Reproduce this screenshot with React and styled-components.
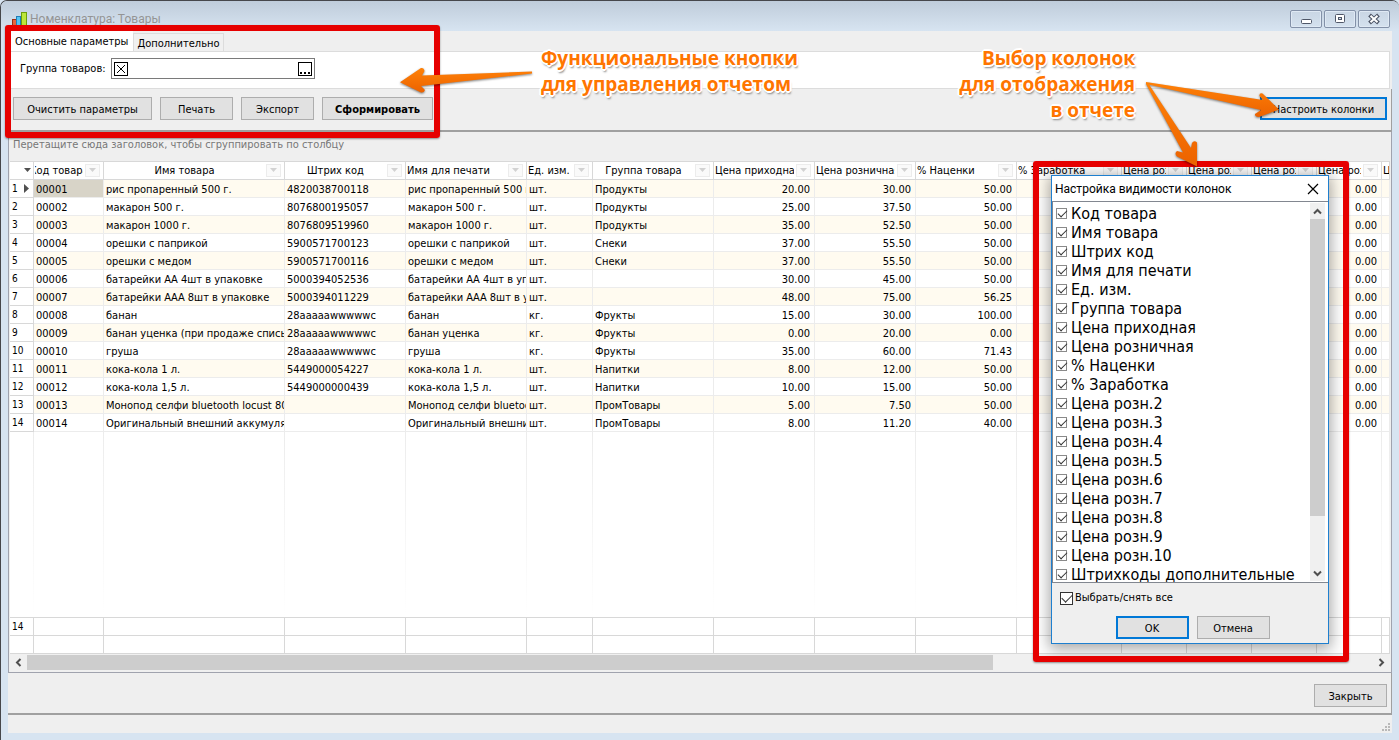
import styled, { createGlobalStyle } from 'styled-components'

const GlobalStyle = createGlobalStyle`
  * {
    box-sizing: border-box;
  }
  body {
    margin: 0;
    background: #d7e4f1;
    color: #000;
    font-family: 'DejaVu Sans Condensed', 'DejaVu Sans', Tahoma, sans-serif;
    font-size: 11px;
    line-height: 14px;
  }
  button, input {
    font: inherit;
    color: inherit;
  }
`

const columns = [
  { name: 'Код товара', width: 70, centered: true },
  { name: 'Имя товара', width: 181, centered: true },
  { name: 'Штрих код', width: 121, centered: true },
  { name: 'Имя для печати', width: 121 },
  { name: 'Ед. изм.', width: 66 },
  { name: 'Группа товара', width: 121, centered: true },
  { name: 'Цена приходная', width: 101, numeric: true },
  { name: 'Цена розничная', width: 101, numeric: true },
  { name: '% Наценки', width: 101, numeric: true },
  { name: '% Заработка', width: 105, numeric: true },
  { name: 'Цена розн.2', width: 65, numeric: true },
  { name: 'Цена розн.3', width: 65, numeric: true },
  { name: 'Цена розн.4', width: 65, numeric: true },
  { name: 'Цена розн.5', width: 65, numeric: true },
  { name: 'Цена розн.6', numeric: true },
]

const zeros = ['', '0.00', '0.00', '0.00', '0.00', '']

const goods = [
  ['00001', 'рис пропаренный 500 г.', '4820038700118', 'рис пропаренный 500 г.', 'шт.', 'Продукты', '20.00', '30.00', '50.00'],
  ['00002', 'макарон 500 г.', '8076800195057', 'макарон 500 г.', 'шт.', 'Продукты', '25.00', '37.50', '50.00'],
  ['00003', 'макарон 1000 г.', '8076809519960', 'макарон 1000 г.', 'шт.', 'Продукты', '35.00', '52.50', '50.00'],
  ['00004', 'орешки с паприкой', '5900571700123', 'орешки с паприкой', 'шт.', 'Снеки', '37.00', '55.50', '50.00'],
  ['00005', 'орешки с медом', '5900571700116', 'орешки с медом', 'шт.', 'Снеки', '37.00', '55.50', '50.00'],
  ['00006', 'батарейки АА 4шт в упаковке', '5000394052536', 'батарейки АА 4шт в упаковке', 'шт.', '', '30.00', '45.00', '50.00'],
  ['00007', 'батарейки ААА 8шт в упаковке', '5000394011229', 'батарейки ААА 8шт в упаковке', 'шт.', '', '48.00', '75.00', '56.25'],
  ['00008', 'банан', '28aaaaawwwwwc', 'банан', 'кг.', 'Фрукты', '15.00', '30.00', '100.00'],
  ['00009', 'банан уценка (при продаже списывать)', '28aaaaawwwwwc', 'банан уценка', 'кг.', 'Фрукты', '0.00', '20.00', '0.00'],
  ['00010', 'груша', '28aaaaawwwwwc', 'груша', 'кг.', 'Фрукты', '35.00', '60.00', '71.43'],
  ['00011', 'кока-кола 1 л.', '5449000054227', 'кока-кола 1 л.', 'шт.', 'Напитки', '8.00', '12.00', '50.00'],
  ['00012', 'кока-кола 1,5 л.', '5449000000439', 'кока-кола 1,5 л.', 'шт.', 'Напитки', '10.00', '15.00', '50.00'],
  ['00013', 'Монопод селфи bluetooth locust 80 см', '', 'Монопод селфи bluetooth', 'шт.', 'ПромТовары', '5.00', '7.50', '50.00'],
  ['00014', 'Оригинальный внешний аккумулятор', '', 'Оригинальный внешний', 'шт.', 'ПромТовары', '8.00', '11.20', '40.00'],
].map(row => [...row, ...zeros])

const columnChoices = [
  'Код товара', 'Имя товара', 'Штрих код', 'Имя для печати', 'Ед. изм.',
  'Группа товара', 'Цена приходная', 'Цена розничная', '% Наценки', '% Заработка',
  'Цена розн.2', 'Цена розн.3', 'Цена розн.4', 'Цена розн.5', 'Цена розн.6',
  'Цена розн.7', 'Цена розн.8', 'Цена розн.9', 'Цена розн.10', 'Штрихкоды дополнительные',
]

const Window = styled.div`
  position: relative;
  display: flex;
  flex-direction: column;
  min-height: 100vh;
  padding: 0 7px 7px;
  overflow: hidden;
  background: #d7e4f1;
  border: 1px solid #46474b;
  border-width: 1px 0 0 1px;
  border-radius: 7px 7px 0 0;
`
const TitleBar = styled.header`
  display: flex;
  align-items: center;
  gap: 3px;
  height: 30px;
  margin: 0 -7px;
  padding: 6px 9px 0 10px;
  background: linear-gradient(#bfccda, #d7e4f1);
`
const Title = styled.h1`
  flex: 1;
  margin: 0;
  color: #949494;
  font: 12px/16px Roboto, sans-serif;
`
const CaptionButtons = styled.div`
  display: flex;
  gap: 2px;
`
const CaptionButton = styled.button`
  display: flex;
  align-items: center;
  justify-content: center;
  width: 32px;
  height: 18px;
  padding: 0;
  background: linear-gradient(#c9d6e4, #d4e1ee);
  border: 1px solid #8391a8;
  border-radius: 2px;
  box-shadow: inset 0 0 0 1px #dfe9f4;
`
const Client = styled.main`
  flex: 1;
  display: flex;
  flex-direction: column;
  background: #efefef;
`
const Tabs = styled.div`
  display: flex;
  align-items: flex-end;
  height: 20px;
  padding-left: 2px;
`
const Tab = styled.button`
  height: ${({ active }) => (active ? 20 : 18)}px;
  padding: ${({ active }) => (active ? '2px 5px 0' : '2px 3px 0')};
  background: ${({ active }) => (active ? '#fff' : '#f0f0f0')};
  border: 1px solid #dcdcdc;
  border-width: ${({ active }) => (active ? '0' : '1px 1px 0')};
`
const Params = styled.div`
  display: flex;
  align-items: center;
  gap: 5px;
  height: 38px;
  margin: 0 2px;
  padding: 0 9px 3px;
  background: #fff;
  border: 1px solid #dcdcdc;
  border-left-color: #fff;
`
const Lookup = styled.div`
  display: flex;
  align-items: center;
  width: 204px;
  height: 21px;
  padding: 0 2px;
  border: 1px solid #7a7a7a;
`
const LookupInput = styled.input`
  flex: 1;
  min-width: 0;
  padding: 0 4px;
  background: none;
  border: 0;
  outline: 0;
`
const LookupButton = styled.button`
  display: flex;
  width: 14px;
  height: 14px;
  padding: 0;
  background: #fff;
  border: 1px solid #000;
`
const Toolbar = styled.div`
  display: flex;
  gap: 8px;
  height: 43px;
  padding: 8px 4px 0 5px;
  border-bottom: 2px solid #a0a0a0;
  border-right: 1px solid #a0a0a0;
`
const Button = styled.button`
  min-width: ${({ width }) => width || 73}px;
  height: 23px;
  padding: 2px 0 0;
  margin-left: ${({ pushed }) => (pushed ? 'auto' : 0)};
  background: #e1e1e1;
  border: ${({ focused }) => (focused ? '2px solid #0078d7' : '1px solid #adadad')};
  font-weight: ${({ bold }) => (bold ? 'bold' : 'normal')};
`
const Grid = styled.section`
  flex: 1;
  display: flex;
  flex-direction: column;
  padding: 0 1px;
  border: 1px solid #a0a3ae;
  border-top: 0;
`
const GroupHint = styled.div`
  height: 29px;
  padding: 6px 3px;
  color: #777;
`
const Sheet = styled.div`
  flex: 1;
  display: flex;
  flex-direction: column;
  background: #fff;
`
const Table = styled.table`
  width: 100%;
  table-layout: fixed;
  border-collapse: separate;
  border-spacing: 0;
`
const HeadCell = styled.th`
  height: 19px;
  padding: 0;
  font-weight: normal;
  border: 1px solid #d8d8d8;
  border-width: 1px 1px 1px 0;
`
const HeadContent = styled.div`
  display: flex;
  align-items: center;
  gap: 2px;
  height: 17px;
  padding: ${({ narrow }) => (narrow ? '0 0 0 1px' : '0 3px 0 1px')};
  overflow: hidden;
`
const HeadText = styled.span`
  flex: 1;
  display: flex;
  justify-content: ${({ centered }) => (centered ? 'center' : 'flex-start')};
  min-width: 0;
  overflow: hidden;
  white-space: nowrap;
`
const FilterButton = styled.button`
  flex: none;
  display: flex;
  align-items: center;
  justify-content: center;
  width: 15px;
  height: 13px;
  padding: 0;
  background: #fafafa;
  border: 1px solid #ececec;
`
const CornerMark = styled.div`
  display: flex;
  justify-content: flex-end;
  padding-right: 2px;
`
const Row = styled.tr`
  background: ${({ tinted }) => (tinted ? '#fffbf0' : '#fff')};
`
const RowNumber = styled.th`
  height: 18px;
  padding: 0 3px 0 2px;
  background: #fff;
  border: 1px solid #d8d8d8;
  border-width: 0 1px 1px 0;
  font-size: 10px;
  font-weight: normal;
  line-height: 12px;
  text-align: left;
`
const RowMark = styled.div`
  display: flex;
  align-items: center;
  justify-content: space-between;
`
const Cell = styled.td`
  height: 18px;
  padding: 2px 4px 0 2px;
  overflow: hidden;
  white-space: nowrap;
  text-align: ${({ numeric }) => (numeric ? 'right' : 'left')};
  background: ${({ selected }) => (selected ? '#d8d4c8' : 'none')};
  border: 1px solid #ececec;
  border-width: 0 1px 1px 0;
`
const Filler = styled.div`
  flex: 1;
  display: flex;
`
const FillerColumn = styled.div`
  flex: ${({ width }) => (width ? `0 0 ${width}px` : '1')};
  background: linear-gradient(#ececec, #fff) right / 1px 100% no-repeat;
`
const TotalCell = styled.td`
  height: 18px;
  padding: 0 2px;
  font-size: 10px;
  line-height: 12px;
  border: 1px solid #d8d8d8;
  border-width: 0 1px 1px 0;
`
const Totals = styled(Table)`
  border-top: 1px solid #d8d8d8;
`
const HScroll = styled.div`
  display: flex;
  align-items: center;
  justify-content: space-between;
  height: 18px;
  padding: 0 0 1px;
  background: #f0f0f0;
`
const HThumb = styled.div`
  width: 70%;
  height: 15px;
  margin-right: auto;
  background: #cdcdcd;
`
const ScrollArrow = styled.button`
  display: flex;
  align-items: center;
  justify-content: center;
  width: 17px;
  height: 16px;
  padding: 0;
  background: #f0f0f0;
  border: 0;
`
const Footer = styled.footer`
  display: flex;
  justify-content: flex-end;
  height: 42px;
  padding: 11px 4px 0;
  border: 1px solid #a0a0a0;
  border-width: 0 1px 2px 0;
`
const StatusBar = styled.div`
  display: flex;
  align-items: flex-end;
  justify-content: flex-end;
  height: 18px;
  padding: 0 2px 2px;
`

const Dialog = styled.div`
  position: absolute;
  top: 174px;
  right: 70px;
  display: flex;
  flex-direction: column;
  width: 278px;
  background: #efefef;
  border: 1px solid #1e7fcf;
  box-shadow: 0 3px 14px 2px rgba(0, 0, 0, 0.35);
`
const DialogHead = styled.div`
  display: flex;
  align-items: center;
  justify-content: space-between;
  height: 25px;
  padding: 0 9px 0 3px;
  background: #fff;
`
const DialogTitle = styled.h2`
  margin: 0;
  font: 12px/16px Roboto, sans-serif;
`
const CloseButton = styled.button`
  display: flex;
  padding: 0;
  background: none;
  border: 0;
`
const ListBox = styled.div`
  display: flex;
  height: 382px;
  padding-left: 3px;
  overflow: hidden;
  background: #fff;
  border: 1px solid #828790;
  border-right: 0;
`
const List = styled.ul`
  flex: 1;
  margin: 0;
  padding: 2px 0 0;
  list-style: none;
`
const Choice = styled.label`
  display: flex;
  align-items: center;
  gap: 4px;
  height: 19px;
  font-size: 16px;
  line-height: 19px;
  white-space: nowrap;
`
const Check = styled.input.attrs({ type: 'checkbox' })`
  appearance: none;
  position: relative;
  flex: none;
  width: ${({ large }) => (large ? 13 : 11)}px;
  height: ${({ large }) => (large ? 13 : 11)}px;
  margin: 0;
  background: #fff;
  border: 1px solid ${({ large }) => (large ? '#333' : '#8a8a8a')};

  &:checked::after {
    content: '';
    position: absolute;
    left: 1px;
    top: 1px;
    width: ${({ large }) => (large ? 9 : 8)}px;
    height: ${({ large }) => (large ? 5 : 4)}px;
    border: 1px solid #333;
    border-width: 0 0 1px 1px;
    transform: rotate(-45deg);
  }
`
const VScroll = styled.div`
  display: flex;
  flex-direction: column;
  justify-content: space-between;
  width: 15px;
  margin: 1px 3px 1px 0;
  background: #f0f0f0;

  button {
    width: 15px;
  }
`
const VThumb = styled.div`
  height: 297px;
  margin-bottom: auto;
  background: #cdcdcd;
`
const SelectAll = styled.label`
  display: flex;
  align-items: center;
  gap: 2px;
  padding: 8px 8px 0;
`
const DialogButtons = styled.div`
  display: flex;
  justify-content: center;
  gap: 8px;
  padding: 11px 0 4px 5px;
`

const Frame = styled.div`
  position: absolute;
  border: 6px solid #e60000;
  border-radius: 3px;
  box-shadow: 0 1px 2px rgba(0, 0, 0, 0.4);
  pointer-events: none;
`
const ParamsFrame = styled(Frame)`
  top: 24px;
  left: 4px;
  width: 435px;
  height: 113px;
`
const ColumnsFrame = styled(Frame)`
  top: 160px;
  right: 50px;
  width: 316px;
  height: 501px;
`
const Note = styled.p`
  position: absolute;
  margin: 0;
  color: #ff7500;
  font: bold 19px/26px 'Open Sans', sans-serif;
  white-space: pre-line;
  text-shadow: -2px 0 #fff, 2px 0 #fff, 0 -2px #fff, 0 2px #fff, -1px -1px #fff,
    1px -1px #fff, -1px 1px #fff, 1px 1px #fff, 1px 3px 2px #888;
`
const ButtonsNote = styled(Note)`
  top: 44px;
  left: 540px;
`
const ColumnsNote = styled(Note)`
  top: 44px;
  right: 264px;
  text-align: right;
`
const Arrows = styled.svg`
  position: absolute;
  pointer-events: none;
  filter: drop-shadow(0 1px 1px rgba(0, 0, 0, 0.5));
`
const ButtonsArrow = styled(Arrows)`
  top: 59px;
  left: 394px;
`
const ColumnsArrows = styled(Arrows)`
  top: 74px;
  right: 99px;
`

const AppIcon = () => (
  <svg width="16" height="16" viewBox="0 0 16 16">
    <rect x="1.500" y="8.500" width="4" height="6" fill="#e8653f" stroke="#9a2f14" />
    <rect x="5.500" y="5.500" width="4" height="9" fill="#55c3f2" stroke="#1f7fb8" />
    <rect x="10.500" y="1.500" width="5" height="13" fill="#bde63a" stroke="#6da00a" />
  </svg>
)

const Triangle = ({ color, right }) => (
  <svg width="7" height="9" viewBox="0 0 7 9">
    <path d={right ? 'M1 0v9l5-4.500z' : 'M0 2h7L3.500 6z'} fill={color} />
  </svg>
)

const Chevron = ({ d }) => (
  <svg width="9" height="9" viewBox="0 0 9 9">
    <path d={d} fill="none" stroke="#505050" strokeWidth="2" />
  </svg>
)

const Columns = () => (
  <colgroup>
    <col width="24" />
    {columns.map(({ name, width }) => <col key={name} width={width} />)}
  </colgroup>
)

const GoodsGrid = () => (
  <Grid>
    <GroupHint>Перетащите сюда заголовок, чтобы сгруппировать по столбцу</GroupHint>
    <Sheet>
      <Table>
        <Columns />
        <thead>
          <tr>
            <HeadCell><CornerMark><Triangle color="#505050" /></CornerMark></HeadCell>
            {columns.map(({ name, centered, width }) => (
              <HeadCell key={name}>
                <HeadContent narrow={width ? 0 : 1}>
                  <HeadText centered={centered ? 1 : 0}>{name}</HeadText>
                  {width && <FilterButton aria-label="Фильтр"><Triangle color="#d2d2d2" /></FilterButton>}
                </HeadContent>
              </HeadCell>
            ))}
          </tr>
        </thead>
        <tbody>
          {goods.map((row, i) => (
            <Row key={row[0]} tinted={i % 2 === 0 ? 1 : 0}>
              <RowNumber>
                <RowMark>{i + 1}{i === 0 && <Triangle color="#505050" right />}</RowMark>
              </RowNumber>
              {row.map((value, c) => (
                <Cell key={c} numeric={columns[c].numeric ? 1 : 0} selected={i === 0 && c === 0}>{value}</Cell>
              ))}
            </Row>
          ))}
        </tbody>
      </Table>
      <Filler>
        <FillerColumn width={24} />
        {columns.map(({ name, width }) => <FillerColumn key={name} width={width} />)}
      </Filler>
      <Totals>
        <Columns />
        <tbody>
          <tr>
            <TotalCell>14</TotalCell>
            {columns.map(({ name }) => <TotalCell key={name} />)}
          </tr>
          <tr>
            <TotalCell />
            {columns.map(({ name }) => <TotalCell key={name} />)}
          </tr>
        </tbody>
      </Totals>
    </Sheet>
    <HScroll>
      <ScrollArrow aria-label="Влево"><Chevron d="M6.500 1L3 4.500L6.500 8" /></ScrollArrow>
      <HThumb />
      <ScrollArrow aria-label="Вправо"><Chevron d="M2.500 1L6 4.500L2.500 8" /></ScrollArrow>
    </HScroll>
  </Grid>
)

const ColumnsDialog = () => (
  <Dialog role="dialog" aria-labelledby="columns-title">
    <DialogHead>
      <DialogTitle id="columns-title">Настройка видимости колонок</DialogTitle>
      <CloseButton aria-label="Закрыть окно">
        <svg width="12" height="12" viewBox="0 0 12 12">
          <path d="M1 1l10 10M11 1L1 11" stroke="#000" strokeWidth="1.200" />
        </svg>
      </CloseButton>
    </DialogHead>
    <ListBox>
      <List>
        {columnChoices.map(name => (
          <li key={name}>
            <Choice><Check defaultChecked /> {name}</Choice>
          </li>
        ))}
      </List>
      <VScroll>
        <ScrollArrow aria-label="Вверх"><Chevron d="M1 6.500L4.500 3L8 6.500" /></ScrollArrow>
        <VThumb />
        <ScrollArrow aria-label="Вниз"><Chevron d="M1 2.500L4.500 6L8 2.500" /></ScrollArrow>
      </VScroll>
    </ListBox>
    <SelectAll><Check large={1} defaultChecked /> Выбрать/снять все</SelectAll>
    <DialogButtons>
      <Button focused={1}>OK</Button>
      <Button>Отмена</Button>
    </DialogButtons>
  </Dialog>
)

const App = () => (
  <Window>
    <GlobalStyle />
    <TitleBar>
      <AppIcon />
      <Title>Номенклатура: Товары</Title>
      <CaptionButtons>
        <CaptionButton aria-label="Свернуть">
          <svg width="12" height="12"><rect x="1.500" y="6.500" width="10" height="4" rx="1" fill="#fff" stroke="#4f5768" /></svg>
        </CaptionButton>
        <CaptionButton aria-label="Развернуть">
          <svg width="12" height="12">
            <rect x="1.500" y="1.500" width="9" height="8" rx="1" fill="#fff" stroke="#4f5768" />
            <rect x="4.500" y="4.500" width="3" height="2" fill="#d4e1ee" stroke="#4f5768" />
          </svg>
        </CaptionButton>
        <CaptionButton aria-label="Закрыть">
          <svg width="12" height="12">
            <path d="M1.500 2l9 8M10.500 2l-9 8" stroke="#4f5768" strokeWidth="4" />
            <path d="M2.500 2.800l7 6.400M9.500 2.800l-7 6.400" stroke="#fff" strokeWidth="2" />
          </svg>
        </CaptionButton>
      </CaptionButtons>
    </TitleBar>
    <Client>
      <Tabs>
        <Tab active={1}>Основные параметры</Tab>
        <Tab>Дополнительно</Tab>
      </Tabs>
      <Params>
        <label htmlFor="group">Группа товаров:</label>
        <Lookup>
          <LookupButton aria-label="Очистить">
            <svg width="12" height="12"><path d="M2 2l8 8M10 2l-8 8" stroke="#000" /></svg>
          </LookupButton>
          <LookupInput id="group" />
          <LookupButton aria-label="Выбрать">
            <svg width="12" height="12"><path d="M1 9h2v2H1zM5 9h2v2H5zM9 9h2v2H9z" /></svg>
          </LookupButton>
        </Lookup>
      </Params>
      <Toolbar>
        <Button width={139}>Очистить параметры</Button>
        <Button>Печать</Button>
        <Button>Экспорт</Button>
        <Button width={111} bold={1}>Сформировать</Button>
        <Button width={127} focused={1} pushed={1}>Настроить колонки</Button>
      </Toolbar>
      <GoodsGrid />
      <Footer>
        <Button>Закрыть</Button>
      </Footer>
      <StatusBar>
        <svg width="8" height="8">
          <path d="M6 0h2v2H6zM3 3h2v2H3zM6 3h2v2H6zM0 6h2v2H0zM3 6h2v2H3zM6 6h2v2H6z" fill="#b8b8b8" />
        </svg>
      </StatusBar>
    </Client>
    <ColumnsDialog />
    <ParamsFrame />
    <ColumnsFrame />
    <ButtonsNote>{'Функциональные кнопки\nдля управления отчетом'}</ButtonsNote>
    <ColumnsNote>{'Выбор колонок\nдля отображения\nв отчете'}</ColumnsNote>
    <ButtonsArrow width="145" height="44">
      <defs>
        <linearGradient id="orange" x1="0" y1="0" x2="0" y2="1">
          <stop offset="0" stopColor="#ff8208" />
          <stop offset="1" stopColor="#ec6200" />
        </linearGradient>
      </defs>
      <path d="M137 11.500L27 15.500L29.500 11Q29 7.500 26 8L5 22.300L26 32.500Q29 33 30 30L26 26L137 13.500Z" fill="url(#orange)" />
    </ButtonsArrow>
    <ColumnsArrows width="160" height="100">
      <path d="M6 7L123 25L119.500 21Q119 17.500 122.500 18.500L139 34.500L119 42Q114.500 42 115 39L121 35L6 9Z" fill="url(#orange)" />
      <path d="M8 8L51 73L52 68Q54 65 57 67.500L57 91.500L37 81.500Q34 78.500 37 76L43 77.500L6 9Z" fill="url(#orange)" />
    </ColumnsArrows>
  </Window>
)

export default App
